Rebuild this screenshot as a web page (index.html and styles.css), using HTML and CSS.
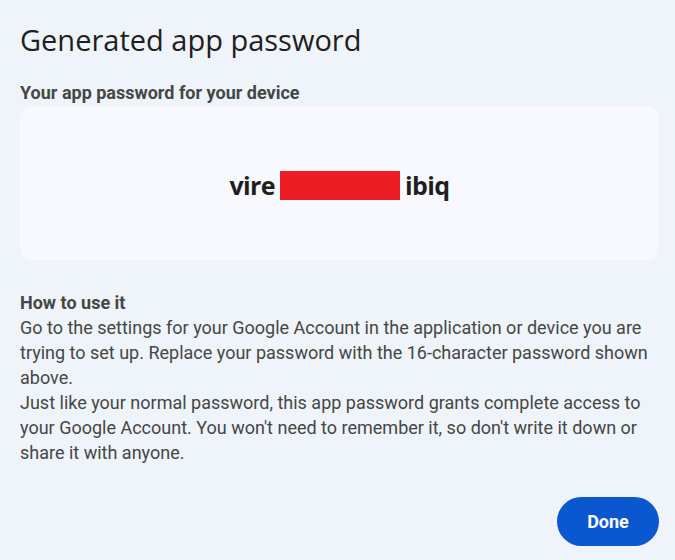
FILE: index.html
```html
<!DOCTYPE html>
<html>
<head>
<meta charset="utf-8">
<link rel="stylesheet" href="styles.css">
</head>
<body>
<div class="dialog">
  <h1 class="title">Generated app password</h1>
  <div class="label">Your app password for your device</div>
  <div class="card">
    <div class="pw"><span>vire</span><span class="redact"></span><span>ibiq</span></div>
  </div>
  <div class="howto">
    <div class="howto-title">How to use it</div>
    <div class="howto-text">Go to the settings for your Google Account in the application or device you are trying to set up. Replace your password with the 16-character password shown above.</div>
    <div class="howto-text">Just like your normal password, this app password grants complete access to your Google Account. You won't need to remember it, so don't write it down or share it with anyone.</div>
  </div>
  <div class="actions"><button class="done">Done</button></div>
</div>
</body>
</html>
```
FILE: styles.css
```css
html, body {
  margin: 0;
  padding: 0;
  background: #eff3fa;
}
body {
  width: 675px;
  height: 560px;
  overflow: hidden;
  font-family: Roboto, "Liberation Sans", sans-serif;
  color: #1f1f1f;
}
.dialog {
  padding: 22px 16px 0 20px;
  display: flex;
  flex-direction: column;
}
.title {
  margin: 0;
  font-family: "Open Sans", Roboto, sans-serif;
  font-weight: 400;
  font-size: 29px;
  line-height: 36px;
  color: #1f1f1f;
}
.label {
  margin-top: 23px;
  font-size: 18px;
  font-weight: 700;
  line-height: 24px;
  color: #444746;
}
.card {
  margin-top: 1px;
  height: 154px;
  background: #f8f9fe;
  border-radius: 12px;
  display: flex;
  align-items: center;
  justify-content: center;
}
.pw {
  display: flex;
  align-items: center;
  gap: 5px;
  font-family: "Open Sans", Roboto, sans-serif;
  font-weight: 700;
  font-size: 25px;
  color: #1f1f1f;
  letter-spacing: -0.6px;
  margin-top: 4px;
}
.redact {
  display: inline-block;
  width: 120px;
  height: 29px;
  background: #ee1c25;
}
.howto {
  margin-top: 30px;
  color: #444746;
  font-size: 18px;
  line-height: 25px;
}
.howto-title {
  font-weight: 700;
}
.actions {
  display: flex;
  justify-content: flex-end;
  margin-top: 32px;
}
.done {
  width: 102px;
  height: 49px;
  border: none;
  border-radius: 25px;
  background: #0b57d0;
  color: #fff;
  font-family: Roboto, sans-serif;
  font-weight: 700;
  font-size: 18px;
}
```
